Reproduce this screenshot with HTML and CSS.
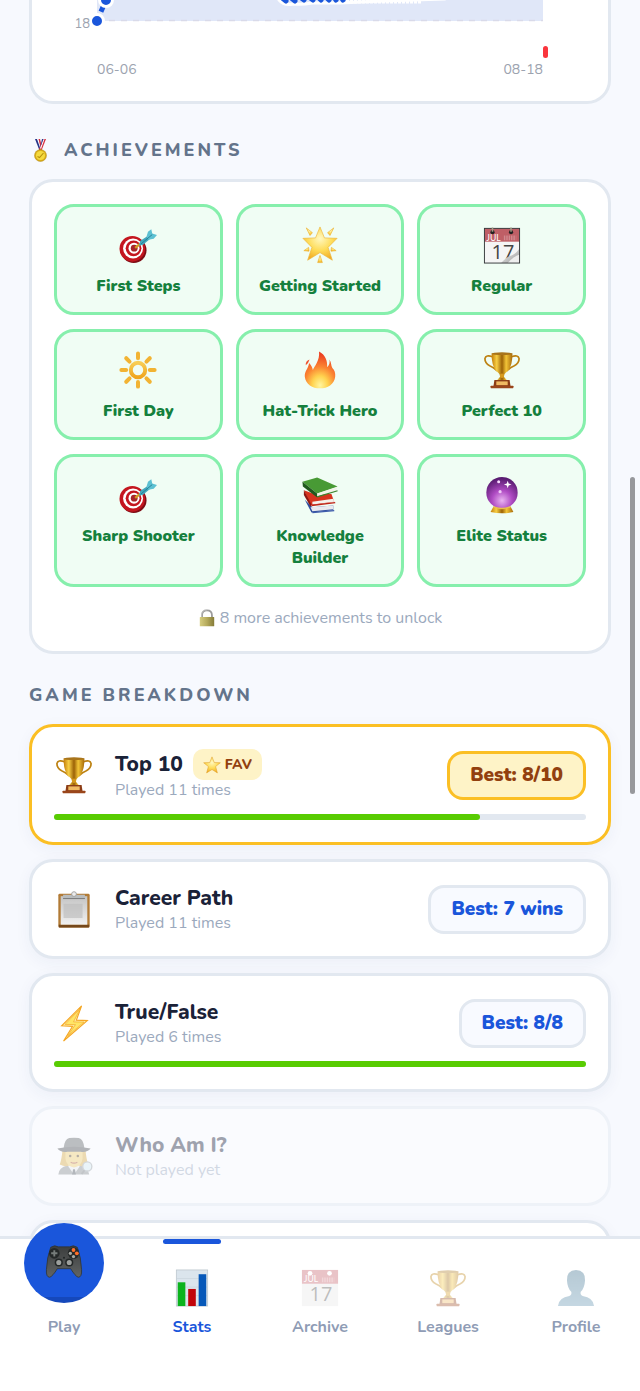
FILE: index.html
```html
<!DOCTYPE html>
<html lang="en">
<head>
<meta charset="utf-8">
<meta name="viewport" content="width=device-width, initial-scale=1">
<title>Stats</title>
<link rel="stylesheet" href="styles.css">
</head>
<body>
<svg class="sprite" width="0" height="0" aria-hidden="true">
  <defs>
    <linearGradient id="gold" x1="0" x2="1" y1="0" y2="0"><stop offset="0" stop-color="#c27c08"/><stop offset=".25" stop-color="#f7cf45"/><stop offset=".5" stop-color="#9c6206"/><stop offset=".7" stop-color="#f2c437"/><stop offset="1" stop-color="#a86a08"/></linearGradient>
    <linearGradient id="sunny" x1="0" x2="0" y1="0" y2="1"><stop offset="0" stop-color="#f8cd55"/><stop offset="1" stop-color="#f0a51d"/></linearGradient>
    <radialGradient id="starfill" cx=".5" cy=".35" r=".65"><stop offset="0" stop-color="#fff8c0"/><stop offset=".55" stop-color="#fedc58"/><stop offset="1" stop-color="#f1ac24"/></radialGradient>
    <radialGradient id="flame" cx=".5" cy=".92" r=".85"><stop offset="0" stop-color="#fff6a0"/><stop offset=".3" stop-color="#ffd34f"/><stop offset=".6" stop-color="#fb8532"/><stop offset="1" stop-color="#ec3f22"/></radialGradient>
    <radialGradient id="orb" cx=".5" cy=".75" r=".7"><stop offset="0" stop-color="#e9b4f1"/><stop offset=".45" stop-color="#b04cc4"/><stop offset="1" stop-color="#5a1c72"/></radialGradient>
    <linearGradient id="paper" x1="0" x2="0" y1="0" y2="1"><stop offset="0" stop-color="#c4c4c4"/><stop offset="1" stop-color="#f1f1f1"/></linearGradient>
    <linearGradient id="brass" x1="0" x2="1" y1="0" y2="0"><stop offset="0" stop-color="#d6cd80"/><stop offset=".5" stop-color="#b5aa5c"/><stop offset="1" stop-color="#857b38"/></linearGradient>
    <linearGradient id="pad" x1="0" x2="0" y1="0" y2="1"><stop offset="0" stop-color="#3b3d3d"/><stop offset="1" stop-color="#616464"/></linearGradient>
    <linearGradient id="person" x1="0" x2="0" y1="0" y2="1"><stop offset="0" stop-color="#2f6686"/><stop offset="1" stop-color="#5b8fae"/></linearGradient>
    <linearGradient id="curl" x1="0" x2="1" y1="0" y2="1"><stop offset="0" stop-color="#444"/><stop offset=".45" stop-color="#ccc"/><stop offset="1" stop-color="#999"/></linearGradient>
  </defs>
  <symbol id="i-target" viewBox="0 0 40 40">
    <circle cx="15.500" cy="25.500" r="13.500" fill="#7e0d15"/><circle cx="14" cy="24" r="13.500" fill="#c4161f"/>
    <circle cx="14.800" cy="23.700" r="10.500" fill="#fff"/><circle cx="15.300" cy="23.500" r="8.300" fill="#c4161f"/><circle cx="15.800" cy="23.300" r="5.800" fill="#fff"/><circle cx="16" cy="23.300" r="3.600" fill="#a8262a"/>
    <path d="M17 23 22 19" stroke="#d49b22" stroke-width="2.500"/>
    <path d="M21 20.500 22.500 15.500 31 10 33.500 13 25 20Z" fill="#42a8bd"/>
    <path d="M29 11 30.500 6 34 3.500 35 8 40 9.500 36.500 13.500 31 14.500Z" fill="#5cc0d2"/><path d="M23 19 35 9" stroke="#267f95" stroke-width="1"/>
  </symbol>
  <symbol id="i-glow" viewBox="0 0 40 40">
    <g fill="url(#starfill)" stroke="#edb53b" stroke-width=".7" stroke-linejoin="round"><path d="M20 1 24.700 12.500 38 13 28.500 22.500 33 36 20 28 7 36 11.500 22.500 2 13 15.300 12.500Z"/>
    <path d="M5.500 2 12 7 9.500 10Z"/><path d="M34.500 2 28 7 30.500 10Z"/><path d="M3 26 8 22.500 8.500 26.500Z"/><path d="M37 26 32 22.500 31.500 26.500Z"/><path d="M20 31 22.500 38.500 17.500 38.500Z"/></g>
  </symbol>
  <symbol id="i-star" viewBox="0 0 40 40"><path d="M20 2 25 14.500 38.500 15 28 23.500 32 37.500 20 30 8 37.500 12 23.500 1.500 15 15 14.500Z" fill="url(#starfill)" stroke="#e0a12d" stroke-width="1.200"/></symbol>
  <symbol id="i-sun" viewBox="0 0 40 40">
    <circle cx="20" cy="20" r="7.600" fill="none" stroke="url(#sunny)" stroke-width="4.200"/>
    <path d="M20 2.500v5M20 32.500v5M2.500 20h5M32.500 20h5M7.600 7.600l3.500 3.500M28.900 28.900l3.500 3.500M7.600 32.400l3.500-3.500M28.900 11.100l3.500-3.500" fill="none" stroke="#f2b333" stroke-width="4.200" stroke-linecap="round"/>
  </symbol>
  <symbol id="i-fire" viewBox="0 0 40 40">
    <path d="M19 .500C26 4 28 11 27.500 17 30 15 30.500 12 30 9 32 12 31.500 15 33 18 35 20 36.500 23 36 27 35 35 28 39.300 20 39.300 12 39.300 5 35 4 27 3.500 21 8 18 8.500 12.500 11 15 12 17 12.500 20 14 16 20 10 19 .500Z" fill="url(#flame)"/>
    <path d="M5 15Q4.500 10.500 9 9 8 13 5 15" fill="#f0512c"/>
  </symbol>
  <symbol id="i-trophy" viewBox="0 0 40 40">
    <g fill="none" stroke="#bd8212" stroke-width="1.800"><path d="M10 6Q3 3.500 2 8 2 13 7 15.500 11 17 15 21M30 6Q37 3.500 38 8 38 13 33 15.500 29 17 25 21"/></g>
    <path d="M9 2.500h22Q31 16 26 21 22 24 22 27L25 30.500H15L18 27Q18 24 14 21 9 16 9 2.500Z" fill="url(#gold)"/>
    <ellipse cx="20" cy="2.800" rx="11" ry="1.500" fill="#a8741b"/>
    <circle cx="20" cy="26" r="2.300" fill="#d79b1e"/>
    <path d="M12 30.500h16l1 6.500H11Z" fill="#8c3d16"/><rect x="14" y="32" width="12" height="4" fill="#f0ba62"/><rect x="8" y="36.700" width="24" height="2.500" rx=".5" fill="#9a461b"/>
  </symbol>
  <symbol id="i-books" viewBox="0 0 40 40">
    <path d="M4 25 11 38.500 34 36V31L12 33Z" fill="#314f9e"/><path d="M10 33 34 31V35L12 37Z" fill="#e9e9ee"/><path d="M12 38.500 35 36.500" stroke="#3e5cab" stroke-width="1.200"/>
    <path d="M3 15 10 31 35 27 32 19 14 19Z" fill="#d7341f"/><path d="M12 27 34 24 35 27 12 30Z" fill="#f4f1ec"/><path d="M3 15 11 30 10 32 3 20Z" fill="#8d1712"/><path d="M11 31 36 28" stroke="#bf2318" stroke-width="1.500"/>
    <path d="M1.500 6 17 1.500 38.500 11 17 18.500Z" fill="#489a35"/><path d="M1.500 6 17 18.500V22.500L2 11Z" fill="#20591e"/><path d="M17 18.500 38.500 11.500 36.500 15.500 17 21.500Z" fill="#f2f3e9"/><path d="M17 22 38.500 15.500" stroke="#3b842d" stroke-width="1.300"/>
  </symbol>
  <symbol id="i-orb" viewBox="0 0 40 40">
    <path d="M11 32H29L32 38Q20 40.500 8 38Z" fill="url(#gold)"/><circle cx="20" cy="17.500" r="16.500" fill="url(#orb)"/>
    <path d="M11 32.500Q20 36 29 32.500" stroke="#e8c04d" stroke-width="1.500" fill="none"/>
    <path d="M26 5l1 3 3 1-3 1-1 3-1-3-3-1 3-1Z" fill="#fff"/><circle cx="16.500" cy="6" r="1.600" fill="#f8dcff"/><circle cx="18" cy="16.500" r="1.700" fill="#efc7f7"/>
  </symbol>
  <symbol id="i-lock" viewBox="0 0 40 40">
    <path d="M9 20V14Q9 3 20 3T31 14V20" fill="none" stroke="#9c9c9c" stroke-width="4"/><path d="M8 20V14Q8 2 20 2" fill="none" stroke="#d0d0d0" stroke-width="1.500"/><rect x="4" y="17.500" width="32" height="21" rx="1" fill="url(#brass)"/>
  </symbol>
  <symbol id="i-medal" viewBox="0 0 32 46">
    <path d="M5 0H10L19 20 14 23Z" fill="#253387"/><path d="M9 0h3l6 16-2 4Z" fill="#fff"/><path d="M12 0h3l3 12-2 5Z" fill="#d82d3e"/>
    <path d="M27 0H22L13 20 18 23Z" fill="#d82d3e"/><path d="M22 0h2L17 20l-2-2Z" fill="#fff"/><path d="M19 0h3L15 18Z" fill="#2b388e"/>
    <circle cx="16" cy="33" r="12" fill="#d9ad17" stroke="#b28a19" stroke-width="1"/><circle cx="16" cy="33" r="9" fill="#f5da3e"/><path d="M10 35l4 2 8-9" fill="none" stroke="#b7900d" stroke-width="2.200"/>
  </symbol>
  <symbol id="i-clipboard" viewBox="0 0 40 40">
    <rect x="3.500" y="4" width="33" height="35.500" rx="1.500" fill="#b27b36"/><path d="M4 36.500h32v3H4Z" fill="#75481b"/><rect x="6" y="6.500" width="28" height="30" fill="url(#paper)"/>
    <rect x="9" y="14.500" width="20" height="15" fill="#bdbdbd" opacity=".65"/><path d="M8.500 5h23v3.500h-23Z" fill="#b8bcbe"/><path d="M8.500 9h23" stroke="#777" stroke-width="1"/><circle cx="20" cy="4.300" r="2.500" fill="#ececec" stroke="#a1a1a1"/>
  </symbol>
  <symbol id="i-bolt" viewBox="0 0 40 40"><path d="M28 2 7 23 18.500 23.500 9 39 34 17.500 22.500 17Z" fill="#fff3b8" stroke="#f5a623" stroke-width="1.200"/><path d="M26.500 5 19.500 18.800 30.500 19 13 34 21.500 21.700 10.500 21.500Z" fill="#ffe566" stroke="#f5ad2c" stroke-width=".8"/></symbol>
  <symbol id="i-detective" viewBox="0 0 40 40">
    <path d="M3.500 39.500Q4 32 13 30L20 35 27 30Q35 32 36 39.500Z" fill="#8a9090"/><path d="M14 31 20 39.500 26 31Z" fill="#ededed"/><path d="M19 34h2l1 5.500h-4Z" fill="#50565a"/>
    <path d="M8 13Q7 24 5 29 11 32 15 30H25Q29 32 35 29 33 24 32 13Z" fill="#dcae42"/><path d="M11 14h18v9q-1 8-9 9-8-1-9-9Z" fill="#f4cf6c"/>
    <circle cx="16" cy="20" r="1.300" fill="#544024"/><circle cx="24" cy="20" r="1.300" fill="#544024"/><path d="M16.500 26.500q3.500 2 7 0" fill="none" stroke="#aa4f33" stroke-width="1.200"/>
    <path d="M9 12Q10 2 15 1 20 .500 25 1 30 2 31 12Z" fill="#646767"/><path d="M2.500 12Q20 8.500 37.500 12 34 16.500 27 15.500H13Q6 16.500 2.500 12Z" fill="#4d4f51"/>
    <circle cx="34" cy="31" r="4.800" fill="#d8edf2" stroke="#9ea5a7" stroke-width="1.400"/><path d="M31 35 28 39" stroke="#747879" stroke-width="2"/>
  </symbol>
  <symbol id="i-gamepad" viewBox="0 0 40 40">
    <path d="M6 3.500Q10 .500 14 3H26Q30 .500 34 3.500 38 14 38.500 27 39 35 35 35 32 34 27 26H13Q8 34 5 35 1 35 1.500 27 2 14 6 3.500Z" fill="url(#pad)" stroke="#2d3232" stroke-width=".8"/>
    <circle cx="9.800" cy="9.800" r="5.600" fill="#252929"/><path d="M9.800 6.500v6.600M6.500 9.800h6.600" stroke="#777d7b" stroke-width="2"/>
    <circle cx="30" cy="9.800" r="6" fill="#252929"/><g fill="#ff702b"><circle cx="30" cy="6.300" r="2"/><circle cx="33.500" cy="9.800" r="2"/></g><g fill="#a8aaa5"><circle cx="26.700" cy="9.800" r="1.700"/><circle cx="30" cy="13.200" r="1.700"/></g>
    <g fill="#9c9f9d" stroke="#232727" stroke-width="1.600"><circle cx="14.500" cy="19.500" r="3.500"/><circle cx="25.500" cy="19.500" r="3.500"/></g><circle cx="20" cy="14.500" r="1" fill="#1d2222"/>
  </symbol>
  <symbol id="i-chart" viewBox="0 0 40 40"><rect x="3.500" y="1" width="33" height="38" fill="#dbe5ed" stroke="#bbc5cc" stroke-width=".8"/><path d="M4 10h32M4 19h32M4 28h32" stroke="#c9d4dd" stroke-width=".7"/><rect x="5" y="14" width="8" height="25" fill="#0bb31d"/><rect x="16" y="21" width="8" height="18" fill="#c2040a"/><rect x="27" y="5.500" width="8" height="33.500" fill="#0658b9"/></symbol>
  <symbol id="i-person" viewBox="0 0 40 40"><path d="M20 1Q30 1.500 29.500 12 29 20 25 24 24 27 27 28.500 38 30 39 39H1Q2 30 13 28.500 16 27 15 24 11 20 10.500 12 10 1.500 20 1Z" fill="url(#person)"/></symbol>
</svg>

<main class="page">
  <section class="card chart-card" aria-label="Rating history">
    <svg class="chart" viewBox="0 0 576 101">
      <rect x="65" y="0" width="446" height="21" fill="#e0e7f8"/>
      <path d="M65 20.500H511" stroke="#d9dae9" stroke-width="1.500" stroke-dasharray="6 6"/>
      <path d="M65 21 74 0" stroke="#1a56db" stroke-width="5" stroke-dasharray="8 4" stroke-dashoffset="2"/>
      <g fill="#1a56db" stroke="#fff" stroke-width="3">
        <circle cx="65" cy="21" r="6.500"/><circle cx="74" cy="0" r="6.500"/>
      </g>
      <path d="M247 0Q252 6 261 4 270 5 280 3H308L350 1 413 -1" stroke="#fff" stroke-width="3" fill="none" stroke-linecap="round"/>
      <path d="M310 1H390" stroke="#fff" stroke-width="5" stroke-dasharray="3 1"/>
      <path d="M249 -3 254 1M258 -3 263 1M268 -3 272 0M277 -3 281 0M286 -3 289 0M294 -3 297 0M302 -3 304 0M309 -3 311 0" stroke="#1a56db" stroke-width="5" stroke-linecap="round"/>
      <rect x="511" y="46" width="5" height="12" rx="2.500" fill="#fa353d"/>
      <text x="58" y="28" text-anchor="end" class="axis-y">18</text>
      <text x="65" y="74" class="axis-x">06-06</text>
      <text x="511" y="74" text-anchor="end" class="axis-x">08-18</text>
    </svg>
  </section>

  <h2 class="heading heading-medal"><svg class="icon-medal"><use href="#i-medal"/></svg>ACHIEVEMENTS</h2>
  <section class="card achievements">
    <ul class="tiles">
      <li class="tile"><svg class="icon"><use href="#i-target"/></svg><span>First Steps</span></li>
      <li class="tile"><svg class="icon"><use href="#i-glow"/></svg><span>Getting Started</span></li>
      <li class="tile">
        <svg class="icon" viewBox="0 0 40 40">
          <rect x="1.500" y="2.500" width="37" height="36.500" fill="#f5f5f5"/><rect x="1.500" y="2.500" width="37" height="14" fill="#bf5f66"/>
          <path d="M22 12.500h13" stroke="#d18a8f" stroke-width="5" stroke-dasharray="1.500 1"/>
          <text x="3.500" y="15.500" class="cal-month">JUL</text><text x="9" y="35" class="cal-day">17</text>
          <path d="M38.500 23.500Q35 29 30 31 25 32 19 39H38.500Z" fill="url(#curl)"/><path d="M38.500 30Q32 32 26 39h12.500Z" fill="#eee"/>
          <rect x="1.500" y="2.500" width="37" height="36.500" fill="none" stroke="#35383a" stroke-width="1"/>
          <g fill="#222"><circle cx="10" cy="6.500" r="2.200"/><circle cx="29.500" cy="6.500" r="2.200"/></g><path d="M10 6V1.500M29.500 6V1.500" stroke="#a39b85" stroke-width="1.600"/>
        </svg>
        <span>Regular</span>
      </li>
      <li class="tile"><svg class="icon"><use href="#i-sun"/></svg><span>First Day</span></li>
      <li class="tile"><svg class="icon"><use href="#i-fire"/></svg><span>Hat-Trick Hero</span></li>
      <li class="tile"><svg class="icon"><use href="#i-trophy"/></svg><span>Perfect 10</span></li>
      <li class="tile"><svg class="icon"><use href="#i-target"/></svg><span>Sharp Shooter</span></li>
      <li class="tile"><svg class="icon"><use href="#i-books"/></svg><span>Knowledge<br>Builder</span></li>
      <li class="tile"><svg class="icon"><use href="#i-orb"/></svg><span>Elite Status</span></li>
    </ul>
    <p class="more"><svg class="icon-xs"><use href="#i-lock"/></svg>8 more achievements to unlock</p>
  </section>

  <h2 class="heading heading-games">GAME BREAKDOWN</h2>
  <div class="games">
    <article class="card game game-fav">
      <div class="game-row">
        <svg class="icon"><use href="#i-trophy"/></svg>
        <div class="game-text"><div class="title-row"><h3>Top 10</h3><span class="fav"><svg class="icon-xs"><use href="#i-star"/></svg>FAV</span></div><p>Played 11 times</p></div>
        <span class="best">Best: 8/10</span>
      </div>
      <div class="bar"><div class="bar-fill" style="width:80%"></div></div>
    </article>
    <article class="card game">
      <div class="game-row">
        <svg class="icon"><use href="#i-clipboard"/></svg>
        <div class="game-text"><h3>Career Path</h3><p>Played 11 times</p></div>
        <span class="best">Best: 7 wins</span>
      </div>
    </article>
    <article class="card game">
      <div class="game-row">
        <svg class="icon"><use href="#i-bolt"/></svg>
        <div class="game-text"><h3>True/False</h3><p>Played 6 times</p></div>
        <span class="best">Best: 8/8</span>
      </div>
      <div class="bar"><div class="bar-fill" style="width:100%"></div></div>
    </article>
    <article class="card game game-off">
      <div class="game-row">
        <svg class="icon"><use href="#i-detective"/></svg>
        <div class="game-text"><h3>Who Am I?</h3><p>Not played yet</p></div>
      </div>
    </article>
    <article class="card game"></article>
  </div>
</main>

<div class="scroll-thumb"></div>

<nav class="nav">
  <a class="nav-item nav-play" href="#play"><span class="play-disc"><svg class="icon"><use href="#i-gamepad"/></svg></span>Play</a>
  <a class="nav-item nav-active" href="#stats" aria-current="page"><svg class="icon"><use href="#i-chart"/></svg>Stats</a>
  <a class="nav-item" href="#archive">
    <svg class="icon" viewBox="0 0 40 40">
      <rect x="1" y="1" width="38" height="38" fill="#e8e8e8"/><rect x="1" y="1" width="38" height="14.500" fill="#c35560"/>
      <path d="M22 11.500h13" stroke="#d88e95" stroke-width="5" stroke-dasharray="1.500 1"/>
      <text x="3" y="14" class="cal-month">JUL</text><text x="9" y="34" class="cal-day">17</text>
      <g fill="#fff"><circle cx="9.500" cy="4.500" r="2.500"/><circle cx="30" cy="4.500" r="2.500"/></g>
    </svg>Archive</a>
  <a class="nav-item" href="#leagues"><svg class="icon"><use href="#i-trophy"/></svg>Leagues</a>
  <a class="nav-item" href="#profile"><svg class="icon"><use href="#i-person"/></svg>Profile</a>
</nav>
</body>
</html>
```
FILE: styles.css
```css
* { box-sizing: border-box; }
body {
  margin: 0;
  height: 100vh;
  overflow: hidden;
  background: #f7f9fe;
  color: #1a2238;
  font-family: Nunito, Lato, "Open Sans", sans-serif;
}
h2, h3, p, ul { margin: 0; padding: 0; }
.sprite { position: absolute; }
.icon { display: block; flex: none; width: 38px; height: 38px; }
.icon-medal { flex: none; width: 23px; height: 23px; }
.icon-xs { flex: none; width: 18px; height: 18px; }
.cal-month { font: 9px Lato, sans-serif; fill: #fff; }
.cal-day { font: 21px "Open Sans", sans-serif; fill: #444; }

.page { padding: 0 29px; }
.card {
  background: #fff;
  border: 3px solid #e2e8f0;
  border-radius: 24px;
}
.chart-card { border-top: 0; border-radius: 0 0 24px 24px; }
.chart { display: block; width: 100%; }
.axis-y { font-size: 13px; fill: #9ca3af; }
.axis-x { font-size: 14px; fill: #9ca3af; }

.heading {
  display: flex;
  align-items: center;
  gap: 12px;
  color: #64748b;
  font-size: 18px;
  line-height: 24px;
  font-weight: 800;
  letter-spacing: 3px;
}
.heading-medal { padding: 34px 0 17px; }
.heading-games { padding: 29px 0 17px; }

.achievements { padding: 22px; }
.tiles {
  display: grid;
  grid-template-columns: repeat(3, 1fr);
  gap: 14px 13px;
  list-style: none;
}
.tile {
  display: flex;
  flex-direction: column;
  align-items: center;
  gap: 11px;
  padding: 19px 8px 15px;
  border: 3px solid #86efac;
  border-radius: 20px;
  background: #f0fdf4;
  color: #15803d;
  font-size: 16px;
  line-height: 22px;
  font-weight: 900;
  text-align: center;
}
.more {
  display: flex;
  justify-content: center;
  align-items: center;
  gap: 4px;
  padding-top: 20px;
  color: #9ba9bd;
  font-size: 16px;
  line-height: 22px;
}

.games { display: grid; gap: 14px; }
.game { padding: 22px; box-shadow: 0 4px 16px rgba(30, 50, 120, .05); }
.game-row { display: flex; align-items: center; gap: 21px; }
.game-row .icon { width: 40px; }
.game-text { flex: 1; }
.title-row { display: flex; align-items: center; gap: 10px; }
h3 { font-size: 21px; line-height: 29px; font-weight: 800; }
.game-text p { color: #9ba9bd; font-size: 16px; line-height: 21px; }
.fav {
  display: flex;
  align-items: center;
  gap: 4px;
  padding: 0 10px;
  border-radius: 10px;
  background: #fef3c7;
  color: #92400e;
  font-size: 14px;
  line-height: 31px;
  font-weight: 800;
}
.best {
  padding: 0 20px;
  border: 3px solid #e2e8f0;
  border-radius: 16px;
  background: #f8faff;
  color: #1a56db;
  font-size: 19px;
  line-height: 43px;
  font-weight: 900;
}
.game-fav { border-color: #fbbf24; }
.game-fav .best { border-color: #fbbf24; background: #fef3c7; color: #92400e; }
.game-off { opacity: .4; box-shadow: none; }
.bar {
  margin-top: 13px;
  border-radius: 3px;
  background: #e2e8f0;
}
.bar-fill { height: 6px; border-radius: 3px; background: #58cc02; }

.scroll-thumb {
  position: fixed;
  top: 477px;
  right: 5px;
  width: 5px;
  height: 317px;
  border-radius: 3px;
  background: #97989c;
}

.nav {
  position: fixed;
  inset: auto 0 0;
  display: grid;
  grid-template-columns: repeat(5, 1fr);
  padding-bottom: 52px;
  border-top: 3px solid #e2e8f0;
  background: #fff;
}
.nav-item {
  position: relative;
  display: flex;
  flex-direction: column;
  align-items: center;
  justify-content: flex-end;
  gap: 8px;
  height: 100px;
  color: #8f9cb5;
  font-size: 16px;
  line-height: 24px;
  font-weight: 700;
  text-decoration: none;
}
.nav-item > .icon { opacity: .35; }
.nav-active { color: #1a56db; }
.nav-active > .icon { opacity: 1; }
.nav-active::before {
  content: "";
  position: absolute;
  top: 0;
  width: 58px;
  height: 5px;
  border-radius: 3px;
  background: #1a56db;
}
.play-disc {
  position: absolute;
  top: -16px;
  display: grid;
  place-items: center;
  width: 80px;
  height: 80px;
  border-radius: 50%;
  background: linear-gradient(#1a56db 74px, #1548bb 74px);
}
```
